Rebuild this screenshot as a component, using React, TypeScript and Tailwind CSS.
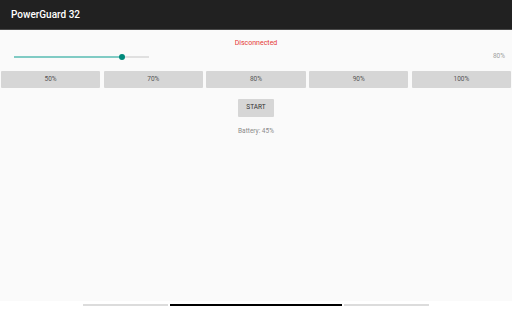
import React from "react"

const levels = ["50%", "70%", "80%", "90%", "100%"]

function Slider({ value }: { value: number }) {
  return (
    <div className="relative ml-[14px] h-[12px] w-[135px]">
      <div className="absolute left-0 right-0 top-[5px] h-[2px] bg-[#e0e0e0]" />
      <div
        className="absolute left-0 top-[5px] h-[2px] bg-[#80cbc4]"
        style={{ width: `${value}%` }}
      />
      <div
        className="absolute top-[3px] h-[6px] w-[6px] -translate-x-1/2 rounded-full bg-[#00897b]"
        style={{ left: `${value}%` }}
      />
    </div>
  )
}

export default function App() {
  return (
    <div
      className="flex h-[309px] w-[512px] flex-col overflow-hidden bg-white"
      style={{ fontFamily: "Roboto, 'Liberation Sans', sans-serif" }}
    >
      <header className="flex h-[30px] items-center border-b border-[#4a4a4a] bg-[#212121] px-[11px]">
        <span className="text-[10px] font-medium text-white">PowerGuard 32</span>
      </header>

      <main className="flex h-[271px] flex-col bg-[#fafafa]">
        <p className="mt-[9px] h-[9px] text-center text-[7px] leading-[9px] text-[#e53935]">
          Disconnected
        </p>

        <div className="mt-[3px] flex h-[12px] items-center justify-between pr-[7px]">
          <Slider value={80} />
          <span className="text-[6.5px] text-[#9e9e9e]">80%</span>
        </div>

        <div className="mt-[8px] grid h-[17px] grid-cols-5 gap-[3.5px] px-[1px]">
          {levels.map((l) => (
            <button
              key={l}
              className="flex items-center justify-center rounded-[1px] bg-[#d6d6d6] text-[6.5px] font-normal text-[#555]"
            >
              {l}
            </button>
          ))}
        </div>

        <div className="mt-[11px] flex justify-center">
          <button className="flex h-[18px] w-[36px] items-center justify-center rounded-[1px] bg-[#d6d6d6] text-[6.5px] font-normal text-[#333]">
            START
          </button>
        </div>

        <p className="mt-[10px] h-[9px] text-center text-[6.5px] leading-[9px] text-[#8a8a8a]">
          Battery: 45%
        </p>
      </main>

      <div className="flex flex-1 items-start justify-center gap-[2px] bg-white pt-[3px]">
        <div className="h-[2px] w-[85px] bg-[#dcdcdc]" />
        <div className="h-[2px] w-[172px] bg-black" />
        <div className="h-[2px] w-[85px] bg-[#dcdcdc]" />
      </div>
    </div>
  )
}
